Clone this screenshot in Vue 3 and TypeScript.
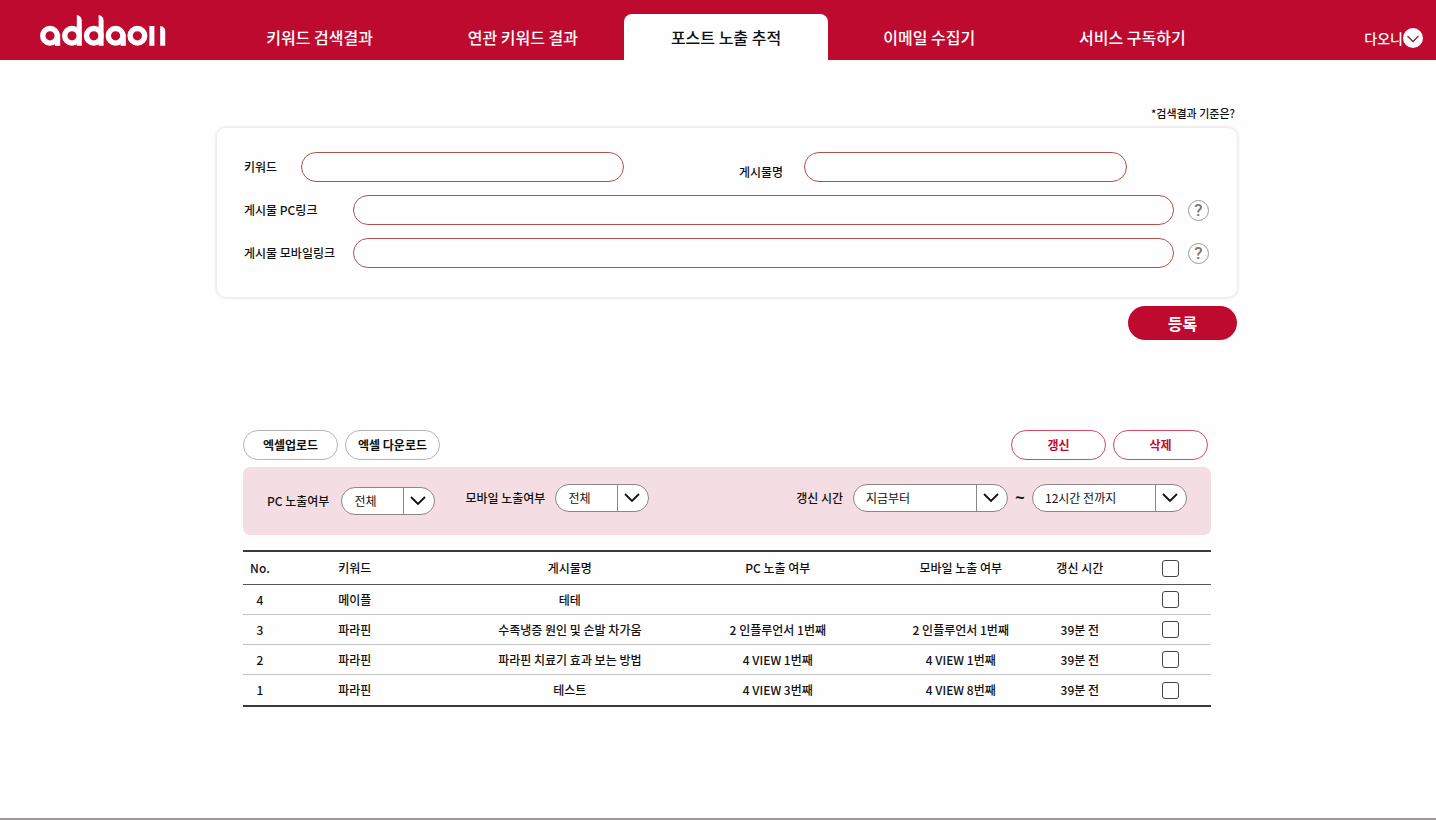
<script setup lang="ts">
import { computed, reactive, ref } from 'vue'

interface Post {
  no: number
  keyword: string
  title: string
  pc: string
  mobile: string
  updated: string
}

const tabs: string[] = ['키워드 검색결과', '연관 키워드 결과', '포스트 노출 추적', '이메일 수집기', '서비스 구독하기']
const activeTab = ref(2)

const form = reactive({ keyword: '', title: '', pcLink: '', mobileLink: '' })
const filters = reactive({ pc: '전체', mobile: '전체', from: '지금부터', to: '12시간 전까지' })

const posts: Post[] = [
  { no: 4, keyword: '메이플', title: '테테', pc: '', mobile: '', updated: '' },
  { no: 3, keyword: '파라핀', title: '수족냉증 원인 및 손발 차가움', pc: '2 인플루언서 1번째', mobile: '2 인플루언서 1번째', updated: '39분 전' },
  { no: 2, keyword: '파라핀', title: '파라핀 치료기 효과 보는 방법', pc: '4 VIEW 1번째', mobile: '4 VIEW 1번째', updated: '39분 전' },
  { no: 1, keyword: '파라핀', title: '테스트', pc: '4 VIEW 3번째', mobile: '4 VIEW 8번째', updated: '39분 전' },
]

const selected = ref<number[]>([])
const allSelected = computed<boolean>({
  get: () => selected.value.length === posts.length,
  set: (on) => {
    selected.value = on ? posts.map((p) => p.no) : []
  },
})
</script>

<template>
  <div class="page">
    <header class="header">
      <a class="logo" href="#" aria-label="addaon">
        <svg width="128" height="34" viewBox="0 0 128 34" aria-hidden="true">
          <g fill="none" stroke="#fff" stroke-width="5.4">
            <circle cx="11" cy="21.8" r="7.3" />
            <circle cx="33" cy="21.8" r="7.3" />
            <circle cx="54.8" cy="21.8" r="7.3" />
            <circle cx="76.6" cy="21.8" r="7.3" />
            <circle cx="98.4" cy="21.8" r="7.3" />
          </g>
          <g fill="#fff">
            <rect x="16" y="20" width="5.2" height="11.8" />
            <path d="M37.8 1q5 .8 5 6v24.800h-5z" />
            <path d="M59.600 1q5 .8 5 6v24.800h-5z" />
            <rect x="81.600" y="20" width="5.200" height="11.8" />
            <rect x="110.400" y="12" width="5" height="19.800" />
            <path d="M121.200 12q5 .8 5 5v14.800h-5z" />
          </g>
        </svg>
      </a>
      <nav class="tabs">
        <a
          v-for="(tab, i) in tabs"
          :key="tab"
          href="#"
          class="tab"
          :class="{ active: i === activeTab }"
          @click.prevent="activeTab = i"
        >{{ tab }}</a>
      </nav>
      <button class="user" type="button">
        다오니
        <svg width="20" height="20" viewBox="0 0 20 20" aria-hidden="true">
          <circle cx="10" cy="10" r="10" fill="#fff" />
          <path d="M4.5 8l5.5 5.5L15.5 8" fill="none" stroke="#7a2a22" stroke-width="1.3" />
        </svg>
      </button>
    </header>

    <main class="main">
      <a class="criteria" href="#">*검색결과 기준은?</a>

      <form @submit.prevent>
        <div class="card">
          <div class="row">
            <label class="short" for="keyword">키워드</label>
            <input id="keyword" v-model="form.keyword" type="text" />
            <label class="title-label" for="title">게시물명</label>
            <input id="title" v-model="form.title" type="text" />
            <span class="row-end"></span>
          </div>
          <div class="row">
            <label class="long" for="pc-link">게시물 PC링크</label>
            <input id="pc-link" v-model="form.pcLink" type="text" />
            <button class="help" type="button" aria-label="PC링크 도움말">?</button>
          </div>
          <div class="row">
            <label class="long" for="mobile-link">게시물 모바일링크</label>
            <input id="mobile-link" v-model="form.mobileLink" type="text" />
            <button class="help" type="button" aria-label="모바일링크 도움말">?</button>
          </div>
        </div>
        <button class="submit" type="submit">등록</button>
      </form>

      <section class="results">
        <div class="toolbar">
          <button class="pill" type="button">엑셀업로드</button>
          <button class="pill" type="button">엑셀 다운로드</button>
          <span class="spacer"></span>
          <button class="pill red" type="button">갱신</button>
          <button class="pill red" type="button">삭제</button>
        </div>

        <div class="filters">
          <div class="filter pc-filter">
            <label for="f-pc">PC 노출여부</label>
            <span class="select">
              <select id="f-pc" v-model="filters.pc"><option>전체</option></select>
              <span class="arrow"><svg width="16" height="10" viewBox="0 0 16 10" aria-hidden="true"><path d="M1 1l7 7 7-7" /></svg></span>
            </span>
          </div>
          <div class="filter">
            <label for="f-mobile">모바일 노출여부</label>
            <span class="select">
              <select id="f-mobile" v-model="filters.mobile"><option>전체</option></select>
              <span class="arrow"><svg width="16" height="10" viewBox="0 0 16 10" aria-hidden="true"><path d="M1 1l7 7 7-7" /></svg></span>
            </span>
          </div>
          <span class="spacer"></span>
          <div class="filter">
            <label for="f-from">갱신 시간</label>
            <span class="select wide">
              <select id="f-from" v-model="filters.from"><option>지금부터</option></select>
              <span class="arrow"><svg width="16" height="10" viewBox="0 0 16 10" aria-hidden="true"><path d="M1 1l7 7 7-7" /></svg></span>
            </span>
            <label class="tilde" for="f-to">~</label>
            <span class="select wide">
              <select id="f-to" v-model="filters.to"><option>12시간 전까지</option></select>
              <span class="arrow"><svg width="16" height="10" viewBox="0 0 16 10" aria-hidden="true"><path d="M1 1l7 7 7-7" /></svg></span>
            </span>
          </div>
        </div>

        <table class="table">
          <thead>
            <tr>
              <th class="c-no">No.</th>
              <th class="c-keyword">키워드</th>
              <th class="c-title">게시물명</th>
              <th class="c-pc">PC 노출 여부</th>
              <th class="c-mobile">모바일 노출 여부</th>
              <th class="c-time">갱신 시간</th>
              <th class="c-check"><input v-model="allSelected" type="checkbox" aria-label="전체 선택" /></th>
            </tr>
          </thead>
          <tbody>
            <tr v-for="post in posts" :key="post.no">
              <td>{{ post.no }}</td>
              <td>{{ post.keyword }}</td>
              <td class="c-title">{{ post.title }}</td>
              <td>{{ post.pc }}</td>
              <td>{{ post.mobile }}</td>
              <td>{{ post.updated }}</td>
              <td class="c-check"><input v-model="selected" type="checkbox" :value="post.no" :aria-label="`${post.no}번 선택`" /></td>
            </tr>
          </tbody>
        </table>
      </section>
    </main>
  </div>
</template>

<style>
body {
  margin: 0;
  background: #fefefe;
}
</style>

<style scoped>
.page,
.page * {
  box-sizing: border-box;
}

.page {
  min-height: 100vh;
  border-bottom: 2px solid #9b9999;
  font-family: 'Noto Sans CJK KR', sans-serif;
  font-size: 12px;
  font-weight: 500;
  line-height: 20px;
  color: #111;
}

button,
input,
select {
  font: inherit;
  color: inherit;
}

button {
  padding: 0;
  cursor: pointer;
}

a {
  color: inherit;
  text-decoration: none;
}

.header {
  display: flex;
  height: 60px;
  background: #bf0a30;
  color: #fff;
}

.logo {
  width: 216px;
  padding: 14px 0 0 39px;
}

.logo svg {
  display: block;
}

.tabs {
  display: flex;
  flex: 1;
  padding: 14px 4px 0 2px;
}

.tab {
  flex: 1;
  border-radius: 8px 8px 0 0;
  font-size: 16px;
  line-height: 46px;
  text-align: center;
  white-space: nowrap;
}

.tab.active {
  background: #fefefe;
  color: #111;
}

.user {
  display: flex;
  align-items: center;
  justify-content: flex-end;
  width: 198px;
  padding: 16px 13px 0 0;
  border: 0;
  background: none;
  font-size: 14px;
}

.main {
  padding: 43px 198px 40px 216px;
}

.criteria {
  display: block;
  padding-right: 3px;
  font-size: 11px;
  text-align: right;
}

.card {
  display: flex;
  flex-direction: column;
  gap: 13px;
  margin-top: 4px;
  padding: 24px 28px 29px 27px;
  border: 1px solid #ececec;
  border-radius: 10px;
  box-shadow: 0 0 3px #dcdcdc;
}

.row {
  display: flex;
  align-items: center;
}

.row input {
  flex: 1;
  min-width: 0;
  height: 30px;
  padding: 0 14px;
  border: 1px solid #b0504c;
  border-radius: 15px;
  background: none;
  outline: none;
}

.short {
  width: 57px;
}

.long {
  width: 109px;
}

.title-label {
  align-self: flex-end;
  padding: 0 21px 0 115px;
}

.row-end {
  width: 82px;
}

.help {
  width: 21px;
  height: 21px;
  margin-left: 14px;
  border: 1px solid #999;
  border-radius: 50%;
  background: none;
  color: #777;
  font-family: Roboto, sans-serif;
  font-size: 17px;
  line-height: 19px;
}

.submit {
  display: block;
  width: 109px;
  height: 34px;
  margin: 8px 1px 0 auto;
  border: 0;
  border-radius: 17px;
  background: #bf0a30;
  color: #fff;
  font-size: 16px;
  font-weight: 700;
}

.results {
  padding: 90px 27px 0;
}

.toolbar {
  display: flex;
  gap: 7px;
  padding-right: 3px;
}

.pill {
  width: 95px;
  height: 30px;
  border: 1px solid #b5b5b5;
  border-radius: 15px;
  background: #fff;
  font-weight: 700;
}

.pill.red {
  border-color: #cf4a66;
  color: #bf0a30;
}

.spacer {
  flex: 1;
}

.filters {
  display: flex;
  align-items: flex-start;
  gap: 30px;
  height: 68px;
  margin-top: 7px;
  padding: 17px 24px;
  border-radius: 7px;
  background: #f5dee3;
}

.filter {
  display: flex;
  align-items: center;
  gap: 10px;
  white-space: nowrap;
}

.pc-filter {
  align-self: center;
  gap: 12px;
}

.tilde {
  display: flex;
  justify-content: center;
  width: 4px;
  font-family: 'Liberation Sans', sans-serif;
  font-size: 16px;
  font-weight: 700;
}

.select {
  display: grid;
  width: 94px;
  height: 28px;
  overflow: hidden;
  border: 1px solid #8d8587;
  border-radius: 14px;
  background: #fff;
}

.select.wide {
  width: 155px;
}

.select select {
  grid-area: 1 / 1;
  width: 100%;
  padding: 0 32px 0 12px;
  border: 0;
  background: none;
  appearance: none;
  outline: none;
  font-weight: 400;
}

.arrow {
  display: flex;
  grid-area: 1 / 1;
  align-items: center;
  justify-content: center;
  justify-self: end;
  width: 31px;
  padding-right: 3px;
  border-left: 1px solid #8d8587;
  pointer-events: none;
}

.arrow path {
  fill: none;
  stroke: #111;
  stroke-width: 1.8;
}

.table {
  width: 100%;
  margin-top: 15px;
  border-top: 2px solid #3a3a3a;
  border-bottom: 2px solid #3a3a3a;
  border-spacing: 0;
  table-layout: fixed;
}

.table th,
.table td {
  height: 30px;
  padding: 0;
  border-bottom: 1px solid #c4c4c4;
  font-weight: 500;
  text-align: center;
  vertical-align: middle;
}

.table th {
  height: 33px;
  border-bottom-color: #555;
}

.table tbody tr:last-child td {
  border-bottom: 0;
}

.table .c-title {
  padding-left: 40px;
}

.table .c-check {
  padding-left: 3px;
}

.c-no { width: 3.5%; }
.c-keyword { width: 16.1%; }
.c-title { width: 24.2%; }
.c-pc { width: 22.9%; }
.c-mobile { width: 14.9%; }
.c-time { width: 9.7%; }
.c-check { width: 8.7%; }

.table input {
  display: block;
  width: 17px;
  height: 17px;
  margin: 0 auto;
  border: 1px solid #444;
  border-radius: 3px;
  background: #fff;
  appearance: none;
}

.table input:checked {
  background: #bf0a30;
}
</style>
